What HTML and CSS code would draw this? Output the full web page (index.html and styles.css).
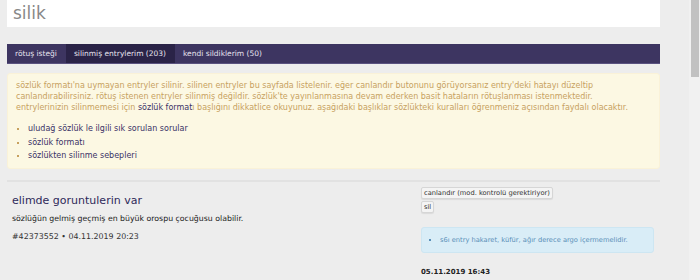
FILE: index.html
```html
<!DOCTYPE html>
<html lang="tr">
<head>
    <meta charset="UTF-8">
    <title>silik</title>
    <link rel="stylesheet" href="styles.css">
</head>
<body>
    <div class="page">
        <div class="title-box">
            <h1 class="page-title">silik</h1>
        </div>

        <ul class="tabs">
            <li><a href="#">rötuş isteği</a></li>
            <li class="active"><a href="#">silinmiş entrylerim (203)</a></li>
            <li><a href="#">kendi sildiklerim (50)</a></li>
        </ul>

        <div class="alert">
            <p>sözlük formatı'na uymayan entryler silinir. silinen entryler bu sayfada listelenir. eğer canlandır butonunu görüyorsanız entry'deki hatayı düzeltip<br>
            canlandırabilirsiniz. rötuş istenen entryler silinmiş değildir. sözlük'te yayınlanmasına devam ederken basit hataların rötuşlanması istenmektedir.<br>
            entrylerinizin silinmemesi için <a class="strong-link" href="#">sözlük format</a>ı başlığını dikkatlice okuyunuz. aşağıdaki başlıklar sözlükteki kuralları öğrenmeniz açısından faydalı olacaktır.</p>
            <ul class="alert-list">
                <li><a href="#">uludağ sözlük le ilgili sık sorulan sorular</a></li>
                <li><a href="#">sözlük formatı</a></li>
                <li><a href="#">sözlükten silinme sebepleri</a></li>
            </ul>
        </div>

        <div class="entry">
            <div class="entry-main">
                <h2 class="entry-title">elimde goruntulerin var</h2>
                <p class="entry-text">sözlüğün gelmiş geçmiş en büyük orospu çocuğusu olabilir.</p>
                <p class="entry-meta">#42373552 &bull; 04.11.2019 20:23</p>
            </div>
            <div class="entry-side">
                <button class="small-btn">canlandır (mod. kontrolü gerektiriyor)</button>
                <button class="small-btn">sil</button>
                <div class="info-box">
                    <ul>
                        <li>s6ı entry hakaret, küfür, ağır derece argo içermemelidir.</li>
                    </ul>
                </div>
                <p class="delete-date">05.11.2019 16:43</p>
            </div>
        </div>
    </div>

    <div class="scrollbar"><div class="scroll-thumb"></div></div>
</body>
</html>
```

FILE: styles.css
```css
body {
    margin: 0;
    background-color: #ededed;
    font-family: "DejaVu Sans", Verdana, sans-serif;
    font-size: 8px;
    color: #333;
}
a {
    text-decoration: none;
}
.page {
    width: 653px;
    margin-left: 7px;
    padding-bottom: 200px;
}

/* kaydirma cubugu (ekran goruntusundeki gibi) */
.scrollbar {
    position: fixed;
    top: 0;
    right: 0;
    width: 11px;
    height: 100%;
    background-color: #f1f1f1;
}
.scroll-thumb {
    margin-left: 2px;
    width: 8px;
    height: 77px;
    background-color: #c1c1c1;
}

/* baslik kutusu */
.title-box {
    background-color: #fff;
    height: 27px;
    padding-left: 6px;
}
.page-title {
    margin: 0;
    font-weight: normal;
    font-size: 17px;
    line-height: 26px;
    color: #888;
}

/* sekmeler */
.tabs {
    list-style: none;
    display: flex;
    margin: 17px 0 0 0;
    padding: 0;
    height: 19px;
    background-color: #3d3561;
    border-bottom: 1px solid #5a5280;
}
.tabs li a {
    display: block;
    padding: 0 9px 0 8px;
    line-height: 19px;
    font-size: 7.5px;
    color: #e6e3ef;
}
.tabs li.active a {
    background-color: #2a2347;
}

/* uyari kutusu */
.alert {
    margin-top: 9px;
    background-color: #fcf8e3;
    border: 1px solid #faf2d8;
    border-radius: 3px;
    padding: 6px 8px 5px 8px;
    color: #c7a15f;
    line-height: 11px;
}
.alert p {
    margin: 0;
}
.strong-link {
    color: #3a3266;
}
.alert-list {
    margin: 9px 0 0 0;
    padding-left: 12px;
    list-style: square;
    line-height: 13.5px;
    font-size: 8px;
}
.alert-list li::marker {
    color: #c7a15f;
    font-size: 6px;
}
.alert-list a {
    color: #3a3266;
}

/* silinmis entry */
.entry {
    display: flex;
    margin-top: 11px;
    border-top: 2px solid #e2e2e2;
    padding-top: 5px;
}
.entry-main {
    width: 409px;
    padding-left: 5px;
}
.entry-title {
    margin: 6px 0 0 0;
    font-weight: normal;
    font-size: 11px;
    line-height: 16px;
    color: #2f2a5a;
}
.entry-text {
    margin: 4px 0 0 0;
    font-size: 7.8px;
    line-height: 12px;
    color: #222;
}
.entry-meta {
    margin: 6px 0 0 0;
    font-size: 7.9px;
    line-height: 12px;
    color: #333;
}
.entry-side {
    width: 233px;
    display: flex;
    flex-direction: column;
    align-items: flex-start;
}
.small-btn {
    font-family: "DejaVu Sans", Verdana, sans-serif;
    font-size: 6.7px;
    color: #333;
    background-color: #f4f4f4;
    border: 1px solid #d6d6d6;
    border-radius: 2px;
    padding: 1px 2px;
    height: 12px;
    margin-bottom: 2px;
    box-shadow: 0 1px 1px rgba(0, 0, 0, 0.08);
}
.info-box {
    align-self: stretch;
    margin-top: 12px;
    background-color: #d9edf7;
    border: 1px solid #cde6f2;
    border-radius: 3px;
    height: 24px;
    display: flex;
    align-items: center;
    color: #5a8fb8;
    font-size: 6.7px;
}
.info-box ul {
    margin: 0;
    padding-left: 18px;
    list-style: square;
}
.delete-date {
    margin: 15px 0 0 0;
    font-weight: bold;
    font-size: 7px;
    color: #222;
}
```
